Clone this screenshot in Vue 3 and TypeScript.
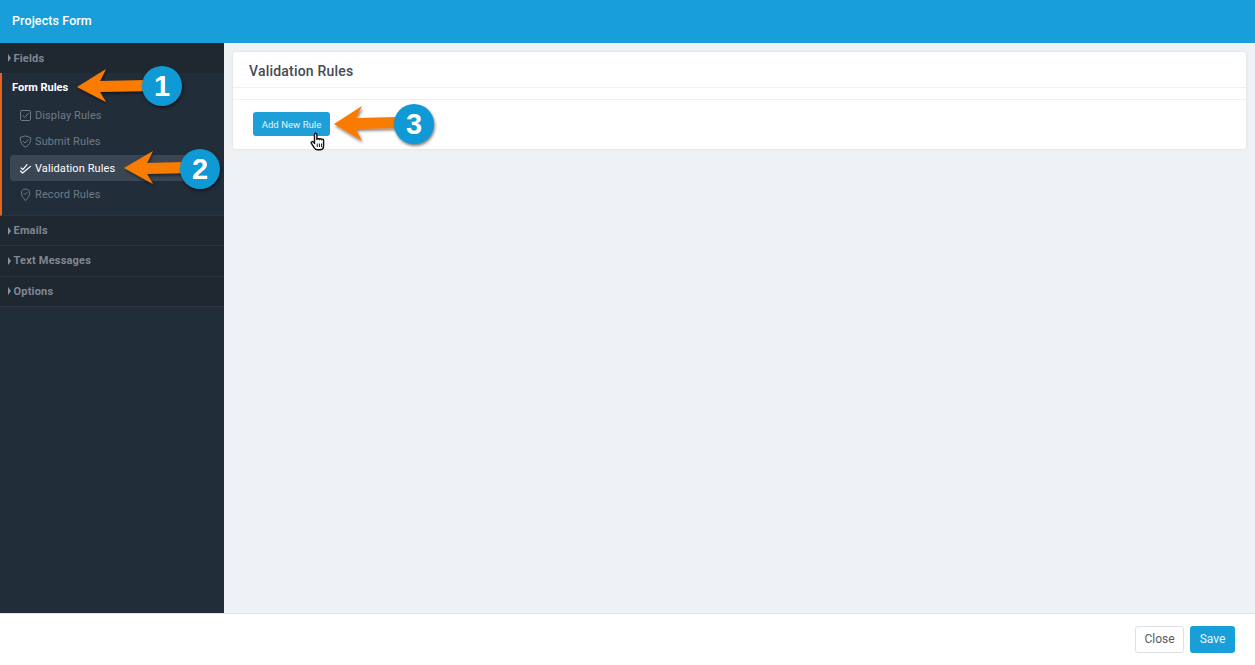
<script setup lang="ts">
interface SubItem { label: string; icon: string; active?: boolean }
const subItems: SubItem[] = [
  { label: 'Display Rules', icon: 'check' },
  { label: 'Submit Rules', icon: 'shield' },
  { label: 'Validation Rules', icon: 'double', active: true },
  { label: 'Record Rules', icon: 'pin' },
]
const collapsed = ['Emails', 'Text Messages', 'Options']
</script>

<template>
  <div class="page">
    <header class="topbar">Projects Form</header>
    <div class="middle">
      <aside class="sidebar">
        <div class="section first"><span class="caret"></span>Fields</div>
        <div class="open">
          <div class="open-title">Form Rules</div>
          <ul class="subs">
            <li v-for="s in subItems" :key="s.label" class="sub" :class="{ active: s.active }">
              <svg class="ico" width="13" height="13" viewBox="0 0 13 13" fill="none" stroke="currentColor" stroke-width="1" stroke-linecap="round" stroke-linejoin="round">
                <template v-if="s.icon === 'check'">
                  <rect x="1.5" y="1.5" width="10" height="10" rx="1.2" />
                  <path d="M3.8 6.6 5.7 8.5 9.4 4.3" />
                </template>
                <template v-else-if="s.icon === 'shield'">
                  <path d="M6.5 1 11.8 2.8C11.8 7.2 10.2 10.4 6.5 12.2 2.8 10.4 1.2 7.2 1.2 2.8Z" />
                  <path d="M4.2 6.3 6 8 9 4.8" />
                </template>
                <template v-else-if="s.icon === 'double'">
                  <path d="M2 5.8 3.8 7.6 8 2.6" stroke-width="1.2" />
                  <path d="M1.5 9 3.6 11 11.5 4.4" stroke-width="1.2" />
                </template>
                <template v-else>
                  <path d="M6.5 12.3C3.8 9.6 2.4 7.6 2.4 5.2A4.1 4.1 0 0 1 10.6 5.2C10.6 7.6 9.2 9.6 6.5 12.3Z" />
                  <path d="M4.9 5.3 6.1 6.5 8.2 4.2" />
                </template>
              </svg>
              {{ s.label }}
            </li>
          </ul>
        </div>
        <div v-for="c in collapsed" :key="c" class="section"><span class="caret"></span>{{ c }}</div>
      </aside>
      <main class="content">
        <section class="card">
          <h2 class="card-title">Validation Rules</h2>
          <div class="strip"></div>
          <div class="card-body">
            <button class="add" type="button">Add New Rule</button>
          </div>
        </section>
      </main>
    </div>
    <footer class="footer">
      <button class="btn close" type="button">Close</button>
      <button class="btn save" type="button">Save</button>
    </footer>

    <svg class="arrows" width="1255" height="665" viewBox="0 0 1255 665">
      <defs>
        <filter id="sh" x="-30%" y="-30%" width="160%" height="170%">
          <feDropShadow dx="1" dy="2" stdDeviation="1.5" flood-color="#000" flood-opacity="0.5" />
        </filter>
      </defs>
      <g fill="#f97b06" filter="url(#sh)">
        <path d="M77 87 106 69 100 81 146 80 146 91 100 92 106 102Z" />
        <path d="M124 168 153 151 147 163 184 162 184 173 147 174 153 184Z" />
        <path d="M334 124 362 106 356 118 398 117 398 128 356 129 362 141Z" />
      </g>
      <g class="cursor">
        <path d="M314.5 134.5c0-1.6 2.4-1.6 2.4 0v5c.2-1.3 2.2-1.3 2.3 0 .2-1.1 2.2-1.1 2.3.2.3-.9 2.1-.7 2.1.6v5.2c0 2.4-1.4 4.3-3.6 4.3h-2.6c-1.5 0-2.3-.8-3.1-2l-2.9-4.5c-.8-1.3 1-2.4 2-1.2l1.1 1.3Z" fill="#fff" stroke="#111" stroke-width="1.4" stroke-linejoin="round" />
        <path d="M317.2 143.5v3.5M319.4 143.5v3.5M321.6 143.5v3.5" stroke="#111" stroke-width="1" fill="none" />
      </g>
    </svg>
    <span class="badge b1">1</span>
    <span class="badge b2">2</span>
    <span class="badge b3">3</span>
  </div>
</template>

<style>
html, body { margin: 0; padding: 0; }
</style>

<style scoped>
.page {
  position: relative;
  width: 1255px;
  height: 665px;
  overflow: hidden;
  display: flex;
  flex-direction: column;
  font-family: Roboto, "Liberation Sans", sans-serif;
  background: #eff2f5;
}
.topbar {
  height: 43px;
  flex: none;
  box-sizing: border-box;
  padding: 0 0 2px 12px;
  display: flex;
  align-items: center;
  background: #189fda;
  color: #fff;
  font-size: 12.5px;
  font-weight: 500;
  letter-spacing: 0.1px;
}
.middle { flex: 1; display: flex; min-height: 0; }
.sidebar {
  width: 224px;
  flex: none;
  background: #222d3a;
  box-sizing: border-box;
}
.section {
  height: 30.3px;
  box-sizing: border-box;
  display: flex;
  align-items: center;
  padding-left: 8px;
  background: #1f2730;
  border-bottom: 1px solid #2b3440;
  color: #7f8894;
  font-size: 11px;
  font-weight: 700;
  letter-spacing: 0.2px;
}
.section.first { height: 30px; border-bottom: 0; }
.caret {
  width: 0;
  height: 0;
  border-style: solid;
  border-width: 4px 0 4px 3.5px;
  border-color: transparent transparent transparent #8a939e;
  margin-right: 2.5px;
}
.open {
  height: 143px;
  box-sizing: border-box;
  border-left: 2px solid #e4641c;
  border-bottom: 1px solid #2b3440;
  padding-top: 7px;
}
.open-title {
  height: 15px;
  line-height: 15px;
  padding-left: 10px;
  color: #fff;
  font-size: 11px;
  font-weight: 700;
}
.subs { list-style: none; margin: 7px 0 0; padding: 0 0 0 8px; }
.sub {
  width: 205px;
  height: 26px;
  box-sizing: border-box;
  padding-left: 8.5px;
  display: flex;
  align-items: center;
  gap: 3.5px;
  color: #6f7a87;
  font-size: 11px;
  letter-spacing: 0.1px;
  border-radius: 4px;
}
.sub.active {
  height: 26px;
  margin: 1px 0 0;
  background: #3a4654;
  color: #fff;
}
.ico { flex: none; }
.content {
  flex: 1;
  box-sizing: border-box;
  border-top: 1px solid #fff;
  padding: 8px 9px 0 9px;
  min-width: 0;
}
.card {
  height: 96.5px;
  background: #fff;
  border-radius: 3px;
  box-shadow: 0 0 3px rgba(40, 50, 70, 0.12);
  display: flex;
  flex-direction: column;
}
.card-title {
  margin: 0;
  height: 35px;
  box-sizing: border-box;
  padding: 11px 0 0 16px;
  color: #444a52;
  font-size: 14px;
  line-height: 16px;
  font-weight: 500;
  letter-spacing: 0.2px;
}
.strip {
  height: 13px;
  box-sizing: border-box;
  border-top: 1px solid #eef0f5;
  border-bottom: 1px solid #eef0f5;
}
.card-body { padding: 12px 0 0 20px; }
.add {
  display: block;
  width: 77px;
  height: 24px;
  padding: 0;
  border: 0;
  border-radius: 3px;
  background: #1f9fd8;
  color: #e6f3fa;
  font: 400 9.5px Roboto, "Liberation Sans", sans-serif;
  letter-spacing: 0.05px;
}
.footer {
  height: 52px;
  flex: none;
  box-sizing: border-box;
  background: #fff;
  border-top: 1px solid #dfe2e7;
  display: flex;
  justify-content: flex-end;
  gap: 6px;
  padding: 12px 20px 0 0;
}
.btn {
  height: 27px;
  padding: 0 0 2px;
  border-radius: 3px;
  font: 400 12px Roboto, "Liberation Sans", sans-serif;
}
.close { width: 49px; background: #fff; border: 1px solid #dde1e7; color: #555b63; }
.save { width: 45px; background: #189fda; border: 0; color: #e8f5fb; }
.arrows { position: absolute; left: 0; top: 0; pointer-events: none; }
.badge {
  position: absolute;
  width: 40px;
  height: 40px;
  border-radius: 50%;
  background: #0f9ad6;
  box-shadow: 1px 2px 3px rgba(0, 0, 0, 0.5);
  color: #fff;
  font: 700 29px/40px "Liberation Sans", sans-serif;
  text-align: center;
}
.b1 { left: 142px; top: 66px; }
.b2 { left: 180px; top: 149px; }
.b3 { left: 394px; top: 104px; }
</style>
